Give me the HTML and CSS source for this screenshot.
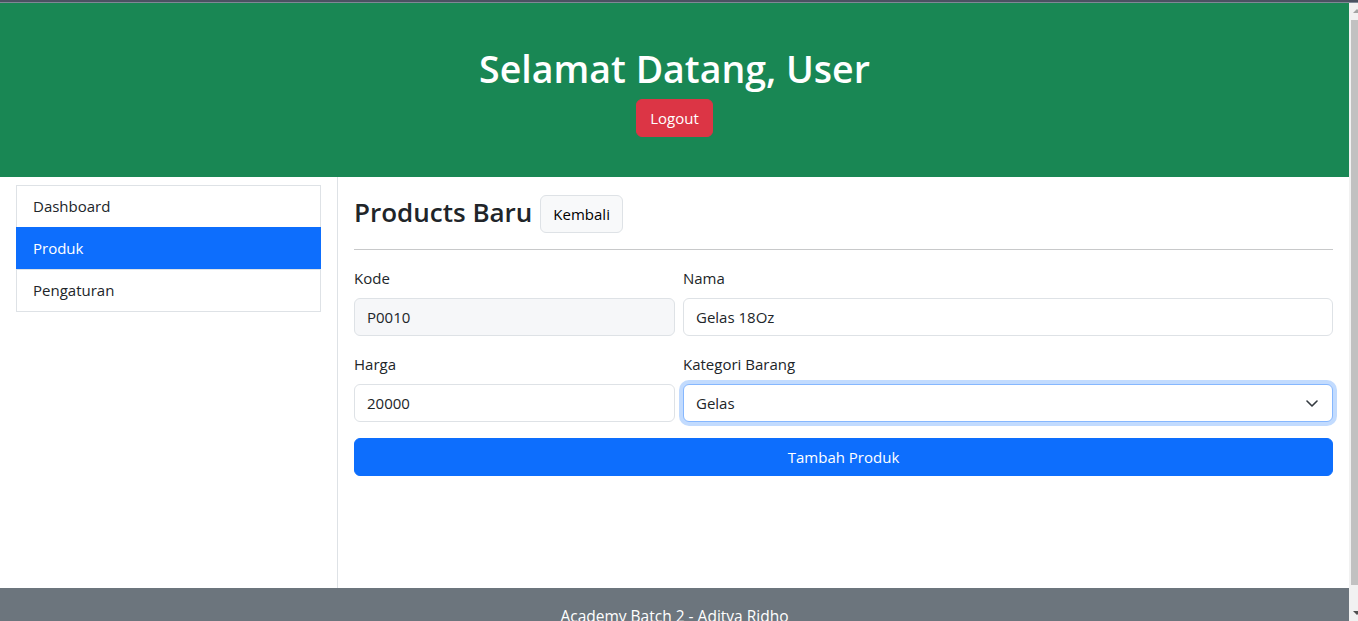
FILE: index.html
```html
<!DOCTYPE html>
<html lang="id">
<head>
<meta charset="utf-8">
<title>Products Baru</title>
<link rel="stylesheet" href="styles.css">
</head>
<body>
<div class="topline"></div>
<div class="viewport">
  <div class="page">
    <header class="hero">
      <h1 class="hero-title">Selamat Datang, User</h1>
      <button class="btn btn-danger" type="button">Logout</button>
    </header>
    <div class="layout">
      <aside class="sidebar">
        <ul class="menu">
          <li class="menu-item">Dashboard</li>
          <li class="menu-item active">Produk</li>
          <li class="menu-item">Pengaturan</li>
        </ul>
      </aside>
      <main class="content">
        <div class="title-row">
          <h3 class="page-title">Products Baru</h3>
          <button class="btn btn-light" type="button">Kembali</button>
        </div>
        <hr class="divider">
        <form class="form-grid">
          <div class="field">
            <label class="form-label">Kode</label>
            <input class="form-control readonly" type="text" value="P0010" readonly>
          </div>
          <div class="field">
            <label class="form-label">Nama</label>
            <input class="form-control" type="text" value="Gelas 18Oz">
          </div>
          <div class="field">
            <label class="form-label">Harga</label>
            <input class="form-control" type="text" value="20000">
          </div>
          <div class="field">
            <label class="form-label">Kategori Barang</label>
            <div class="select-wrap">
              <select class="form-select focused">
                <option>Gelas</option>
              </select>
              <svg class="chevron" width="12" height="7" viewBox="0 0 12 7" aria-hidden="true"><polyline points="1,1 6,6 11,1" fill="none" stroke="#343a40" stroke-width="1.6" stroke-linecap="round" stroke-linejoin="round"/></svg>
            </div>
          </div>
          <button class="btn btn-primary btn-block" type="button">Tambah Produk</button>
        </form>
      </main>
    </div>
    <footer class="footer">Academy Batch 2 - Aditya Ridho</footer>
  </div>
  <div class="scrollbar">
    <div class="sb-btn"><span class="tri tri-up"></span></div>
    <div class="sb-track"><div class="sb-thumb"></div></div>
    <div class="sb-btn sb-btn-bottom"><span class="tri tri-down"></span></div>
  </div>
</div>
</body>
</html>
```
FILE: styles.css
```css
* { box-sizing: border-box; }
html, body { margin: 0; padding: 0; height: 100%; overflow: hidden; }
body {
  font-family: "Open Sans", "Noto Sans", sans-serif;
  font-size: 15px;
  line-height: 24px;
  color: #212529;
  background: #fff;
}
.topline {
  height: 3px;
  background: linear-gradient(#4a5261 0 2px, #7f8895 2px 3px);
}
.viewport {
  display: flex;
  height: 618px;
  overflow: hidden;
}
.page {
  flex: 1;
  min-width: 0;
}
.hero {
  background: #198754;
  color: #fff;
  text-align: center;
  padding: 40px 0;
}
.hero-title {
  margin: 0 0 6px;
  padding-top: 2px;
  font-size: 37.5px;
  font-weight: 600;
  line-height: 48px;
}
.btn {
  display: inline-block;
  font-family: inherit;
  font-size: 15px;
  line-height: 24px;
  padding: 6px 12px;
  border: 1px solid transparent;
  border-radius: 6px;
  cursor: pointer;
}
.btn-danger { background: #dc3545; border-color: #dc3545; color: #fff; padding: 6px 13px; }
.btn-light { background: #f8f9fa; border-color: #dee2e6; color: #000; }
.btn-primary { background: #0d6efd; border-color: #0d6efd; color: #fff; }
.btn-block { display: block; width: 100%; grid-column: 1 / -1; }

.layout {
  display: flex;
  min-height: 411px;
}
.sidebar {
  flex: 0 0 338px;
  padding: 8px 16px;
  border-right: 1px solid #dee2e6;
}
.menu {
  list-style: none;
  margin: 0;
  padding: 0;
  border: 1px solid #dee2e6;
}
.menu-item {
  padding: 8px 16px 9px;
  line-height: 24px;
  border-top: 1px solid #dee2e6;
  color: #212529;
}
.menu-item:first-child { border-top: 0; }
.menu-item.active {
  background: #0d6efd;
  border-top-color: #0d6efd;
  color: #fff;
  margin: 0 -1px;
  padding-left: 17px;
}
.content {
  flex: 1;
  padding: 18px 16px 16px;
}
.title-row {
  display: flex;
  align-items: center;
  gap: 8px;
  height: 38px;
}
.page-title {
  margin: 0 0 5px;
  font-size: 26px;
  font-weight: 600;
  line-height: 38px;
}
.divider {
  margin: 16px 0;
  border: 0;
  border-top: 1px solid #c8c9ca;
  height: 0;
}
.form-grid {
  display: grid;
  grid-template-columns: calc((100% + 8px) / 3 - 8px) 1fr;
  column-gap: 8px;
  row-gap: 16px;
}
.form-label {
  display: block;
  margin-bottom: 8px;
  line-height: 24px;
}
.form-control, .form-select {
  display: block;
  width: 100%;
  height: 38px;
  padding: 6px 12px;
  font-family: inherit;
  font-size: 15px;
  line-height: 24px;
  color: #212529;
  background: #fff;
  border: 1px solid #dee2e6;
  border-radius: 6px;
  outline: none;
}
.form-control.readonly { background: #f6f7f9; }
.select-wrap { position: relative; }
.form-select {
  appearance: none;
  -webkit-appearance: none;
  padding-right: 36px;
}
.form-select.focused {
  border-color: #86b7fe;
  box-shadow: 0 0 0 4px rgba(13, 110, 253, 0.25);
}
.chevron {
  position: absolute;
  right: 15px;
  top: 16px;
  pointer-events: none;
}
.footer {
  background: #6c757d;
  color: #fff;
  text-align: center;
  padding: 16px;
  line-height: 24px;
  font-size: 15.5px;
}
.scrollbar {
  flex: 0 0 9px;
  display: flex;
  flex-direction: column;
  background: #f1f1f1;
}
.sb-btn {
  height: 17px;
  position: relative;
}
.sb-track {
  flex: 1;
  display: flex;
  flex-direction: column;
}
.sb-thumb {
  height: 565px;
  margin-left: 2px;
  background: #c1c1c1;
}
.tri {
  position: absolute;
  left: 4px;
  width: 0;
  height: 0;
  border-left: 4px solid transparent;
  border-right: 4px solid transparent;
}
.tri-up { top: 6px; border-bottom: 4px solid #a3a3a3; }
.tri-down { bottom: 6px; border-top: 4px solid #505050; }
```
